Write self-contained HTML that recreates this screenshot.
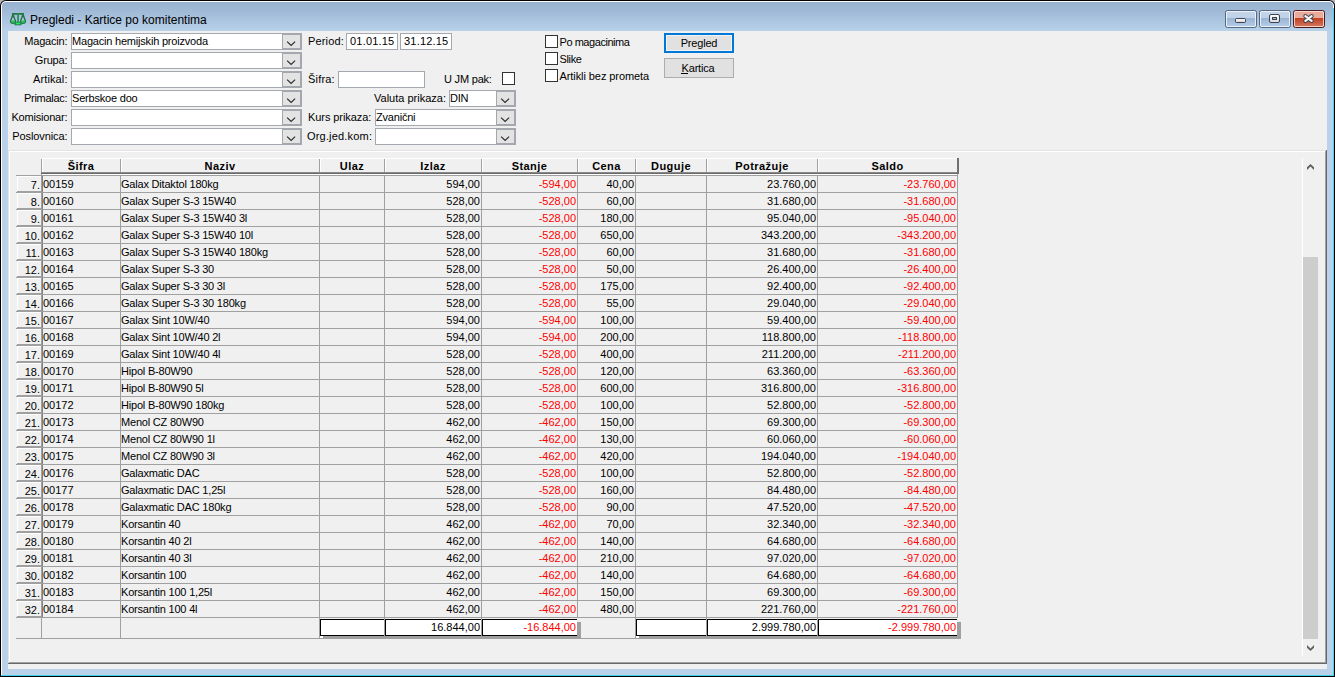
<!DOCTYPE html><html><head><meta charset="utf-8"><title>Pregledi - Kartice po komitentima</title><style>

*{box-sizing:border-box;margin:0;padding:0}
html,body{width:1335px;height:677px;overflow:hidden;background:#b4b4b4}
body{position:relative;font-family:"Liberation Sans",sans-serif;font-size:11px;color:#000}
.ab{position:absolute}
.t{position:absolute;white-space:pre;line-height:17px;height:17px;letter-spacing:-0.2px;margin-top:1px}
.n{position:absolute;white-space:pre;line-height:17px;height:17px;text-align:right;margin-top:1px}
.r{color:#f00}
.hl{position:absolute;height:1px;background:#a0a0a0}
.vl{position:absolute;width:1px;background:#a0a0a0}
.combo{position:absolute;height:17px;border:1px solid #a4a8af;background:#fff}
.combo .btn{position:absolute;right:-1px;top:-1px;width:20px;height:17px;background:#a4a7ad}
.combo .btn i{position:absolute;left:1px;top:2px;width:17px;height:13px;background:#e3e3e3}
.combo .btn svg{position:absolute;left:0;top:0}
.combo .v{position:absolute;left:0px;top:0;line-height:15px;white-space:pre;letter-spacing:-0.2px}
.edit{position:absolute;height:17px;border:1px solid #a4a8af;background:#fff}
.lbl{position:absolute;white-space:pre;line-height:17px;height:17px;text-align:right;letter-spacing:-0.3px}
.chk{position:absolute;width:13px;height:13px;border:1px solid #333;background:#fff}
.hd{position:absolute;top:160px;height:13px;line-height:13px;text-align:center;font-weight:bold;white-space:pre;letter-spacing:0.45px}

</style></head><body>
<div class="ab" style="left:0;top:0;width:1335px;height:677px;border-radius:6px 6px 0 0;background:#000"></div>
<div class="ab" style="left:1px;top:1px;width:1333px;height:675px;border-radius:5px 5px 0 0;background:#fff"></div>
<div class="ab" style="left:2px;top:2px;width:1331px;height:674px;border-radius:4px 4px 0 0;background:linear-gradient(#98b1cf 0px,#a3bcd9 12px,#b9d2ea 29px,#bad1ea 100%)"></div>
<div class="ab" style="left:1333px;top:8px;width:1px;height:669px;background:#3fd3f0"></div>
<div class="ab" style="left:1px;top:675px;width:1333px;height:1px;background:#3fd3f0"></div>
<div class="ab" style="left:0;top:676px;width:1335px;height:1px;background:#000"></div>
<svg class="ab" style="left:8px;top:10px" width="20" height="17" viewBox="0 0 20 17">
<path d="M5 4.5 L2.6 11 Q2.6 13.3 5 13.3 Q7.4 13.3 7.4 11 Z" fill="#b4c8dc" stroke="#1f7544" stroke-width="1.4" stroke-linejoin="round"/>
<path d="M15 4.5 L12.6 11 Q12.6 13.3 15 13.3 Q17.4 13.3 17.4 11 Z" fill="#b4c8dc" stroke="#1f7544" stroke-width="1.4" stroke-linejoin="round"/>
<path d="M3 10.5 Q3 13 5 13 Q7 13 7 10.5 Z" fill="#22c05a"/>
<path d="M13 10.5 Q13 13 15 13 Q17 13 17 10.5 Z" fill="#22c05a"/>
<rect x="4" y="3" width="12" height="1.8" fill="#1f7a45"/>
<rect x="9.2" y="3" width="1.7" height="10" fill="#2a8a55"/>
<path d="M6.8 14.8 Q6.8 11.8 10 11.8 Q13.2 11.8 13.2 14.8 Z" fill="#20e862" stroke="#1a7040" stroke-width="0.9"/>
</svg>
<div class="ab" style="left:30px;top:12px;font-size:12px;line-height:17px;white-space:pre">Pregledi - Kartice po komitentima</div>
<div class="ab" style="left:1225px;top:10px;width:32px;height:18px;border:1px solid #57677f;border-radius:2.5px;background:linear-gradient(#c5d6ea 0px,#bfd1e8 7px,#99b3d2 7px,#a6bfdc 11px,#b5cde8 16px);box-shadow:inset 0 0 0 1px rgba(240,248,255,0.85)"></div>
<div class="ab" style="left:1259px;top:10px;width:32px;height:18px;border:1px solid #57677f;border-radius:2.5px;background:linear-gradient(#c5d6ea 0px,#bfd1e8 7px,#99b3d2 7px,#a6bfdc 11px,#b5cde8 16px);box-shadow:inset 0 0 0 1px rgba(240,248,255,0.85)"></div>
<div class="ab" style="left:1293px;top:10px;width:32px;height:18px;border:1px solid #4b1a20;border-radius:2.5px;background:linear-gradient(#eaa796 0px,#e9ad9e 7px,#c2401f 7px,#c9563a 11px,#d47c66 16px);box-shadow:inset 0 0 0 1px rgba(255,230,220,0.8)"></div>
<div class="ab" style="left:1235px;top:18px;width:11px;height:5px;border:1px solid #3b4453;border-radius:1.5px;background:linear-gradient(#fafafa,#d8d8d8)"></div>
<div class="ab" style="left:1269px;top:14px;width:11px;height:9px;border:1px solid #3b4453;border-radius:2px;background:linear-gradient(#fafafa,#dcdcdc)"></div>
<div class="ab" style="left:1272px;top:17px;width:5px;height:3px;border:1px solid #3b4453;background:#9fb6d2"></div>
<svg class="ab" style="left:1302px;top:13px" width="13" height="11" viewBox="0 0 13 11">
<path d="M3.4 3.1 L9.6 7.9 M9.6 3.1 L3.4 7.9" stroke="#3b4453" stroke-width="4.2" stroke-linecap="round"/>
<path d="M3.4 3.1 L9.6 7.9 M9.6 3.1 L3.4 7.9" stroke="#f4f4f4" stroke-width="2.3" stroke-linecap="round"/>
</svg>
<div class="ab" style="left:8px;top:31px;width:1319px;height:638px;background:#f0f0f0"></div>
<div class="lbl" style="left:0px;top:33px;width:67.30px;letter-spacing:-0.2px">Magacin:</div>
<div class="combo" style="left:71px;top:33px;width:231px"><span class="v">Magacin hemijskih proizvoda</span><div class="btn"><i></i><svg width="20" height="17"><polyline points="5.1,8.6 9.1,12.4 13.1,8.6" fill="none" stroke="#2b2b2b" stroke-width="1.2"/></svg></div></div>
<div class="lbl" style="left:0px;top:52px;width:67.30px;letter-spacing:-0.2px">Grupa:</div>
<div class="combo" style="left:71px;top:52px;width:231px"><span class="v"></span><div class="btn"><i></i><svg width="20" height="17"><polyline points="5.1,8.6 9.1,12.4 13.1,8.6" fill="none" stroke="#2b2b2b" stroke-width="1.2"/></svg></div></div>
<div class="lbl" style="left:0px;top:71px;width:67.63px;letter-spacing:0.13px">Artikal:</div>
<div class="combo" style="left:71px;top:71px;width:231px"><span class="v"></span><div class="btn"><i></i><svg width="20" height="17"><polyline points="5.1,8.6 9.1,12.4 13.1,8.6" fill="none" stroke="#2b2b2b" stroke-width="1.2"/></svg></div></div>
<div class="lbl" style="left:0px;top:90px;width:67.20px;letter-spacing:-0.3px">Primalac:</div>
<div class="combo" style="left:71px;top:90px;width:231px"><span class="v">Serbskoe doo</span><div class="btn"><i></i><svg width="20" height="17"><polyline points="5.1,8.6 9.1,12.4 13.1,8.6" fill="none" stroke="#2b2b2b" stroke-width="1.2"/></svg></div></div>
<div class="lbl" style="left:0px;top:109px;width:67.30px;letter-spacing:-0.2px">Komisionar:</div>
<div class="combo" style="left:71px;top:109px;width:231px"><span class="v"></span><div class="btn"><i></i><svg width="20" height="17"><polyline points="5.1,8.6 9.1,12.4 13.1,8.6" fill="none" stroke="#2b2b2b" stroke-width="1.2"/></svg></div></div>
<div class="lbl" style="left:0px;top:128px;width:67.40px;letter-spacing:-0.1px">Poslovnica:</div>
<div class="combo" style="left:71px;top:128px;width:231px"><span class="v"></span><div class="btn"><i></i><svg width="20" height="17"><polyline points="5.1,8.6 9.1,12.4 13.1,8.6" fill="none" stroke="#2b2b2b" stroke-width="1.2"/></svg></div></div>
<div class="ab" style="left:308px;top:33px;line-height:17px;white-space:pre;letter-spacing:0.15px">Period:</div>
<div class="edit" style="left:346px;top:33px;width:52px"><span class="ab" style="left:3px;top:0;line-height:15px;letter-spacing:0.2px">01.01.15</span></div>
<div class="edit" style="left:400px;top:33px;width:52px"><span class="ab" style="left:3px;top:0;line-height:15px;letter-spacing:0.2px">31.12.15</span></div>
<div class="ab" style="left:308px;top:71px;line-height:17px;white-space:pre;letter-spacing:0.2px">Šifra:</div>
<div class="edit" style="left:338px;top:71px;width:87px"></div>
<div class="ab" style="left:444px;top:71px;line-height:17px;white-space:pre;letter-spacing:-0.2px">U JM pak:</div>
<div class="chk" style="left:502px;top:72px"></div>
<div class="ab" style="left:374px;top:90px;line-height:17px;white-space:pre;letter-spacing:0px">Valuta prikaza:</div>
<div class="combo" style="left:449px;top:90px;width:67px"><span class="v">DIN</span><div class="btn"><i></i><svg width="20" height="17"><polyline points="5.1,8.6 9.1,12.4 13.1,8.6" fill="none" stroke="#2b2b2b" stroke-width="1.2"/></svg></div></div>
<div class="ab" style="left:308px;top:109px;line-height:17px;white-space:pre;letter-spacing:-0.08px">Kurs prikaza:</div>
<div class="combo" style="left:375px;top:109px;width:141px"><span class="v">Zvanični</span><div class="btn"><i></i><svg width="20" height="17"><polyline points="5.1,8.6 9.1,12.4 13.1,8.6" fill="none" stroke="#2b2b2b" stroke-width="1.2"/></svg></div></div>
<div class="ab" style="left:307px;top:128px;line-height:17px;white-space:pre;letter-spacing:0.18px">Org.jed.kom:</div>
<div class="combo" style="left:375px;top:128px;width:141px"><span class="v"></span><div class="btn"><i></i><svg width="20" height="17"><polyline points="5.1,8.6 9.1,12.4 13.1,8.6" fill="none" stroke="#2b2b2b" stroke-width="1.2"/></svg></div></div>
<div class="chk" style="left:545px;top:35px"></div>
<div class="t" style="left:559.5px;top:33px;letter-spacing:-0.45px">Po magacinima</div>
<div class="chk" style="left:545px;top:52px"></div>
<div class="t" style="left:559.5px;top:50px;letter-spacing:-0.35px">Slike</div>
<div class="chk" style="left:545px;top:69px"></div>
<div class="t" style="left:559.5px;top:67px;letter-spacing:-0.08px">Artikli bez prometa</div>
<div class="ab" style="left:664px;top:33px;width:70px;height:20px;border:2px solid #0078d7;background:#e1e1e1;box-shadow:inset 0 0 0 1px #f3f3f3"></div>
<div class="t" style="left:664px;top:34px;width:70px;text-align:center">Pregled</div>
<div class="ab" style="left:664px;top:58px;width:70px;height:20px;border:1px solid #adadad;background:#e1e1e1"></div>
<div class="t" style="left:663px;top:59px;width:70px;text-align:center">Kartica</div>
<div class="ab" style="left:681px;top:73px;width:7px;height:1px;background:#000"></div>
<div class="ab" style="left:8px;top:150px;width:1319px;height:1px;background:#e3e3e3"></div>
<div class="ab" style="left:8px;top:150px;width:1px;height:514px;background:#e3e3e3"></div>
<div class="ab" style="left:9px;top:151px;width:1317px;height:1px;background:#fff"></div>
<div class="ab" style="left:9px;top:151px;width:1px;height:512px;background:#fff"></div>
<div class="ab" style="left:1325px;top:151px;width:1px;height:512px;background:#a0a0a0"></div>
<div class="ab" style="left:9px;top:662px;width:1317px;height:1px;background:#a0a0a0"></div>
<div class="ab" style="left:1326px;top:150px;width:1px;height:514px;background:#696969"></div>
<div class="ab" style="left:8px;top:663px;width:1319px;height:1px;background:#696969"></div>
<div class="ab" style="left:42px;top:158px;width:915px;height:1px;background:#fff"></div>
<div class="ab" style="left:42px;top:159px;width:1px;height:13px;background:#fff"></div>
<div class="hd" style="left:42px;width:78px">Šifra</div>
<div class="ab" style="left:121px;top:159px;width:1px;height:13px;background:#fff"></div>
<div class="hd" style="left:121px;width:198px">Naziv</div>
<div class="ab" style="left:320px;top:159px;width:1px;height:13px;background:#fff"></div>
<div class="hd" style="left:320px;width:64px">Ulaz</div>
<div class="ab" style="left:385px;top:159px;width:1px;height:13px;background:#fff"></div>
<div class="hd" style="left:385px;width:96px">Izlaz</div>
<div class="ab" style="left:482px;top:159px;width:1px;height:13px;background:#fff"></div>
<div class="hd" style="left:482px;width:95px">Stanje</div>
<div class="ab" style="left:578px;top:159px;width:1px;height:13px;background:#fff"></div>
<div class="hd" style="left:578px;width:57px">Cena</div>
<div class="ab" style="left:636px;top:159px;width:1px;height:13px;background:#fff"></div>
<div class="hd" style="left:636px;width:70px">Duguje</div>
<div class="ab" style="left:707px;top:159px;width:1px;height:13px;background:#fff"></div>
<div class="hd" style="left:707px;width:110px">Potražuje</div>
<div class="ab" style="left:818px;top:159px;width:1px;height:13px;background:#fff"></div>
<div class="hd" style="left:818px;width:139px">Saldo</div>
<div class="vl" style="left:41px;top:159px;height:458px"></div>
<div class="vl" style="left:120px;top:159px;height:458px"></div>
<div class="vl" style="left:319px;top:159px;height:458px"></div>
<div class="vl" style="left:384px;top:159px;height:458px"></div>
<div class="vl" style="left:481px;top:159px;height:458px"></div>
<div class="vl" style="left:577px;top:159px;height:458px"></div>
<div class="vl" style="left:635px;top:159px;height:458px"></div>
<div class="vl" style="left:706px;top:159px;height:458px"></div>
<div class="vl" style="left:817px;top:159px;height:458px"></div>
<div class="vl" style="left:957px;top:159px;height:458px"></div>
<div class="ab" style="left:41px;top:172px;width:917px;height:1px;background:#8a8a8a"></div>
<div class="ab" style="left:41px;top:173px;width:917px;height:1px;background:#696969"></div>
<div class="ab" style="left:42px;top:174px;width:915px;height:1px;background:#fff"></div>
<div class="ab" style="left:957px;top:158px;width:2px;height:16px;background:#707070"></div>
<div class="ab" style="left:42px;top:175px;width:1px;height:442px;background:#808080"></div>
<div class="hl" style="left:16px;top:175px;width:942px"></div>
<div class="ab" style="left:17px;top:176px;width:24px;height:1px;background:#fff"></div>
<div class="ab" style="left:17px;top:176px;width:1px;height:15px;background:#fff"></div>
<div class="ab" style="left:17px;top:191px;width:24px;height:1px;background:#a0a0a0"></div>
<div class="n" style="left:16px;top:176px;width:24px">7.</div>
<div class="t" style="left:43px;top:175px;letter-spacing:0">00159</div>
<div class="t" style="left:121px;top:175px">Galax Ditaktol 180kg</div>
<div class="n" style="left:381px;top:175px;width:100px;padding-right:1px">594,00</div>
<div class="n r" style="left:477px;top:175px;width:100px;padding-right:1px">-594,00</div>
<div class="n" style="left:535px;top:175px;width:100px;padding-right:1px">40,00</div>
<div class="n" style="left:717px;top:175px;width:100px;padding-right:1px">23.760,00</div>
<div class="n r" style="left:857px;top:175px;width:100px;padding-right:1px">-23.760,00</div>
<div class="hl" style="left:16px;top:192px;width:942px"></div>
<div class="ab" style="left:17px;top:193px;width:24px;height:1px;background:#fff"></div>
<div class="ab" style="left:17px;top:193px;width:1px;height:15px;background:#fff"></div>
<div class="ab" style="left:17px;top:208px;width:24px;height:1px;background:#a0a0a0"></div>
<div class="n" style="left:16px;top:193px;width:24px">8.</div>
<div class="t" style="left:43px;top:192px;letter-spacing:0">00160</div>
<div class="t" style="left:121px;top:192px">Galax Super S-3 15W40</div>
<div class="n" style="left:381px;top:192px;width:100px;padding-right:1px">528,00</div>
<div class="n r" style="left:477px;top:192px;width:100px;padding-right:1px">-528,00</div>
<div class="n" style="left:535px;top:192px;width:100px;padding-right:1px">60,00</div>
<div class="n" style="left:717px;top:192px;width:100px;padding-right:1px">31.680,00</div>
<div class="n r" style="left:857px;top:192px;width:100px;padding-right:1px">-31.680,00</div>
<div class="hl" style="left:16px;top:209px;width:942px"></div>
<div class="ab" style="left:17px;top:210px;width:24px;height:1px;background:#fff"></div>
<div class="ab" style="left:17px;top:210px;width:1px;height:15px;background:#fff"></div>
<div class="ab" style="left:17px;top:225px;width:24px;height:1px;background:#a0a0a0"></div>
<div class="n" style="left:16px;top:210px;width:24px">9.</div>
<div class="t" style="left:43px;top:209px;letter-spacing:0">00161</div>
<div class="t" style="left:121px;top:209px">Galax Super S-3 15W40 3l</div>
<div class="n" style="left:381px;top:209px;width:100px;padding-right:1px">528,00</div>
<div class="n r" style="left:477px;top:209px;width:100px;padding-right:1px">-528,00</div>
<div class="n" style="left:535px;top:209px;width:100px;padding-right:1px">180,00</div>
<div class="n" style="left:717px;top:209px;width:100px;padding-right:1px">95.040,00</div>
<div class="n r" style="left:857px;top:209px;width:100px;padding-right:1px">-95.040,00</div>
<div class="hl" style="left:16px;top:226px;width:942px"></div>
<div class="ab" style="left:17px;top:227px;width:24px;height:1px;background:#fff"></div>
<div class="ab" style="left:17px;top:227px;width:1px;height:15px;background:#fff"></div>
<div class="ab" style="left:17px;top:242px;width:24px;height:1px;background:#a0a0a0"></div>
<div class="n" style="left:16px;top:227px;width:24px">10.</div>
<div class="t" style="left:43px;top:226px;letter-spacing:0">00162</div>
<div class="t" style="left:121px;top:226px">Galax Super S-3 15W40 10l</div>
<div class="n" style="left:381px;top:226px;width:100px;padding-right:1px">528,00</div>
<div class="n r" style="left:477px;top:226px;width:100px;padding-right:1px">-528,00</div>
<div class="n" style="left:535px;top:226px;width:100px;padding-right:1px">650,00</div>
<div class="n" style="left:717px;top:226px;width:100px;padding-right:1px">343.200,00</div>
<div class="n r" style="left:857px;top:226px;width:100px;padding-right:1px">-343.200,00</div>
<div class="hl" style="left:16px;top:243px;width:942px"></div>
<div class="ab" style="left:17px;top:244px;width:24px;height:1px;background:#fff"></div>
<div class="ab" style="left:17px;top:244px;width:1px;height:15px;background:#fff"></div>
<div class="ab" style="left:17px;top:259px;width:24px;height:1px;background:#a0a0a0"></div>
<div class="n" style="left:16px;top:244px;width:24px">11.</div>
<div class="t" style="left:43px;top:243px;letter-spacing:0">00163</div>
<div class="t" style="left:121px;top:243px">Galax Super S-3 15W40 180kg</div>
<div class="n" style="left:381px;top:243px;width:100px;padding-right:1px">528,00</div>
<div class="n r" style="left:477px;top:243px;width:100px;padding-right:1px">-528,00</div>
<div class="n" style="left:535px;top:243px;width:100px;padding-right:1px">60,00</div>
<div class="n" style="left:717px;top:243px;width:100px;padding-right:1px">31.680,00</div>
<div class="n r" style="left:857px;top:243px;width:100px;padding-right:1px">-31.680,00</div>
<div class="hl" style="left:16px;top:260px;width:942px"></div>
<div class="ab" style="left:17px;top:261px;width:24px;height:1px;background:#fff"></div>
<div class="ab" style="left:17px;top:261px;width:1px;height:15px;background:#fff"></div>
<div class="ab" style="left:17px;top:276px;width:24px;height:1px;background:#a0a0a0"></div>
<div class="n" style="left:16px;top:261px;width:24px">12.</div>
<div class="t" style="left:43px;top:260px;letter-spacing:0">00164</div>
<div class="t" style="left:121px;top:260px">Galax Super S-3 30</div>
<div class="n" style="left:381px;top:260px;width:100px;padding-right:1px">528,00</div>
<div class="n r" style="left:477px;top:260px;width:100px;padding-right:1px">-528,00</div>
<div class="n" style="left:535px;top:260px;width:100px;padding-right:1px">50,00</div>
<div class="n" style="left:717px;top:260px;width:100px;padding-right:1px">26.400,00</div>
<div class="n r" style="left:857px;top:260px;width:100px;padding-right:1px">-26.400,00</div>
<div class="hl" style="left:16px;top:277px;width:942px"></div>
<div class="ab" style="left:17px;top:278px;width:24px;height:1px;background:#fff"></div>
<div class="ab" style="left:17px;top:278px;width:1px;height:15px;background:#fff"></div>
<div class="ab" style="left:17px;top:293px;width:24px;height:1px;background:#a0a0a0"></div>
<div class="n" style="left:16px;top:278px;width:24px">13.</div>
<div class="t" style="left:43px;top:277px;letter-spacing:0">00165</div>
<div class="t" style="left:121px;top:277px">Galax Super S-3 30 3l</div>
<div class="n" style="left:381px;top:277px;width:100px;padding-right:1px">528,00</div>
<div class="n r" style="left:477px;top:277px;width:100px;padding-right:1px">-528,00</div>
<div class="n" style="left:535px;top:277px;width:100px;padding-right:1px">175,00</div>
<div class="n" style="left:717px;top:277px;width:100px;padding-right:1px">92.400,00</div>
<div class="n r" style="left:857px;top:277px;width:100px;padding-right:1px">-92.400,00</div>
<div class="hl" style="left:16px;top:294px;width:942px"></div>
<div class="ab" style="left:17px;top:295px;width:24px;height:1px;background:#fff"></div>
<div class="ab" style="left:17px;top:295px;width:1px;height:15px;background:#fff"></div>
<div class="ab" style="left:17px;top:310px;width:24px;height:1px;background:#a0a0a0"></div>
<div class="n" style="left:16px;top:295px;width:24px">14.</div>
<div class="t" style="left:43px;top:294px;letter-spacing:0">00166</div>
<div class="t" style="left:121px;top:294px">Galax Super S-3 30 180kg</div>
<div class="n" style="left:381px;top:294px;width:100px;padding-right:1px">528,00</div>
<div class="n r" style="left:477px;top:294px;width:100px;padding-right:1px">-528,00</div>
<div class="n" style="left:535px;top:294px;width:100px;padding-right:1px">55,00</div>
<div class="n" style="left:717px;top:294px;width:100px;padding-right:1px">29.040,00</div>
<div class="n r" style="left:857px;top:294px;width:100px;padding-right:1px">-29.040,00</div>
<div class="hl" style="left:16px;top:311px;width:942px"></div>
<div class="ab" style="left:17px;top:312px;width:24px;height:1px;background:#fff"></div>
<div class="ab" style="left:17px;top:312px;width:1px;height:15px;background:#fff"></div>
<div class="ab" style="left:17px;top:327px;width:24px;height:1px;background:#a0a0a0"></div>
<div class="n" style="left:16px;top:312px;width:24px">15.</div>
<div class="t" style="left:43px;top:311px;letter-spacing:0">00167</div>
<div class="t" style="left:121px;top:311px">Galax Sint 10W/40</div>
<div class="n" style="left:381px;top:311px;width:100px;padding-right:1px">594,00</div>
<div class="n r" style="left:477px;top:311px;width:100px;padding-right:1px">-594,00</div>
<div class="n" style="left:535px;top:311px;width:100px;padding-right:1px">100,00</div>
<div class="n" style="left:717px;top:311px;width:100px;padding-right:1px">59.400,00</div>
<div class="n r" style="left:857px;top:311px;width:100px;padding-right:1px">-59.400,00</div>
<div class="hl" style="left:16px;top:328px;width:942px"></div>
<div class="ab" style="left:17px;top:329px;width:24px;height:1px;background:#fff"></div>
<div class="ab" style="left:17px;top:329px;width:1px;height:15px;background:#fff"></div>
<div class="ab" style="left:17px;top:344px;width:24px;height:1px;background:#a0a0a0"></div>
<div class="n" style="left:16px;top:329px;width:24px">16.</div>
<div class="t" style="left:43px;top:328px;letter-spacing:0">00168</div>
<div class="t" style="left:121px;top:328px">Galax Sint 10W/40 2l</div>
<div class="n" style="left:381px;top:328px;width:100px;padding-right:1px">594,00</div>
<div class="n r" style="left:477px;top:328px;width:100px;padding-right:1px">-594,00</div>
<div class="n" style="left:535px;top:328px;width:100px;padding-right:1px">200,00</div>
<div class="n" style="left:717px;top:328px;width:100px;padding-right:1px">118.800,00</div>
<div class="n r" style="left:857px;top:328px;width:100px;padding-right:1px">-118.800,00</div>
<div class="hl" style="left:16px;top:345px;width:942px"></div>
<div class="ab" style="left:17px;top:346px;width:24px;height:1px;background:#fff"></div>
<div class="ab" style="left:17px;top:346px;width:1px;height:15px;background:#fff"></div>
<div class="ab" style="left:17px;top:361px;width:24px;height:1px;background:#a0a0a0"></div>
<div class="n" style="left:16px;top:346px;width:24px">17.</div>
<div class="t" style="left:43px;top:345px;letter-spacing:0">00169</div>
<div class="t" style="left:121px;top:345px">Galax Sint 10W/40 4l</div>
<div class="n" style="left:381px;top:345px;width:100px;padding-right:1px">528,00</div>
<div class="n r" style="left:477px;top:345px;width:100px;padding-right:1px">-528,00</div>
<div class="n" style="left:535px;top:345px;width:100px;padding-right:1px">400,00</div>
<div class="n" style="left:717px;top:345px;width:100px;padding-right:1px">211.200,00</div>
<div class="n r" style="left:857px;top:345px;width:100px;padding-right:1px">-211.200,00</div>
<div class="hl" style="left:16px;top:362px;width:942px"></div>
<div class="ab" style="left:17px;top:363px;width:24px;height:1px;background:#fff"></div>
<div class="ab" style="left:17px;top:363px;width:1px;height:15px;background:#fff"></div>
<div class="ab" style="left:17px;top:378px;width:24px;height:1px;background:#a0a0a0"></div>
<div class="n" style="left:16px;top:363px;width:24px">18.</div>
<div class="t" style="left:43px;top:362px;letter-spacing:0">00170</div>
<div class="t" style="left:121px;top:362px">Hipol B-80W90</div>
<div class="n" style="left:381px;top:362px;width:100px;padding-right:1px">528,00</div>
<div class="n r" style="left:477px;top:362px;width:100px;padding-right:1px">-528,00</div>
<div class="n" style="left:535px;top:362px;width:100px;padding-right:1px">120,00</div>
<div class="n" style="left:717px;top:362px;width:100px;padding-right:1px">63.360,00</div>
<div class="n r" style="left:857px;top:362px;width:100px;padding-right:1px">-63.360,00</div>
<div class="hl" style="left:16px;top:379px;width:942px"></div>
<div class="ab" style="left:17px;top:380px;width:24px;height:1px;background:#fff"></div>
<div class="ab" style="left:17px;top:380px;width:1px;height:15px;background:#fff"></div>
<div class="ab" style="left:17px;top:395px;width:24px;height:1px;background:#a0a0a0"></div>
<div class="n" style="left:16px;top:380px;width:24px">19.</div>
<div class="t" style="left:43px;top:379px;letter-spacing:0">00171</div>
<div class="t" style="left:121px;top:379px">Hipol B-80W90 5l</div>
<div class="n" style="left:381px;top:379px;width:100px;padding-right:1px">528,00</div>
<div class="n r" style="left:477px;top:379px;width:100px;padding-right:1px">-528,00</div>
<div class="n" style="left:535px;top:379px;width:100px;padding-right:1px">600,00</div>
<div class="n" style="left:717px;top:379px;width:100px;padding-right:1px">316.800,00</div>
<div class="n r" style="left:857px;top:379px;width:100px;padding-right:1px">-316.800,00</div>
<div class="hl" style="left:16px;top:396px;width:942px"></div>
<div class="ab" style="left:17px;top:397px;width:24px;height:1px;background:#fff"></div>
<div class="ab" style="left:17px;top:397px;width:1px;height:15px;background:#fff"></div>
<div class="ab" style="left:17px;top:412px;width:24px;height:1px;background:#a0a0a0"></div>
<div class="n" style="left:16px;top:397px;width:24px">20.</div>
<div class="t" style="left:43px;top:396px;letter-spacing:0">00172</div>
<div class="t" style="left:121px;top:396px">Hipol B-80W90 180kg</div>
<div class="n" style="left:381px;top:396px;width:100px;padding-right:1px">528,00</div>
<div class="n r" style="left:477px;top:396px;width:100px;padding-right:1px">-528,00</div>
<div class="n" style="left:535px;top:396px;width:100px;padding-right:1px">100,00</div>
<div class="n" style="left:717px;top:396px;width:100px;padding-right:1px">52.800,00</div>
<div class="n r" style="left:857px;top:396px;width:100px;padding-right:1px">-52.800,00</div>
<div class="hl" style="left:16px;top:413px;width:942px"></div>
<div class="ab" style="left:17px;top:414px;width:24px;height:1px;background:#fff"></div>
<div class="ab" style="left:17px;top:414px;width:1px;height:15px;background:#fff"></div>
<div class="ab" style="left:17px;top:429px;width:24px;height:1px;background:#a0a0a0"></div>
<div class="n" style="left:16px;top:414px;width:24px">21.</div>
<div class="t" style="left:43px;top:413px;letter-spacing:0">00173</div>
<div class="t" style="left:121px;top:413px">Menol CZ 80W90</div>
<div class="n" style="left:381px;top:413px;width:100px;padding-right:1px">462,00</div>
<div class="n r" style="left:477px;top:413px;width:100px;padding-right:1px">-462,00</div>
<div class="n" style="left:535px;top:413px;width:100px;padding-right:1px">150,00</div>
<div class="n" style="left:717px;top:413px;width:100px;padding-right:1px">69.300,00</div>
<div class="n r" style="left:857px;top:413px;width:100px;padding-right:1px">-69.300,00</div>
<div class="hl" style="left:16px;top:430px;width:942px"></div>
<div class="ab" style="left:17px;top:431px;width:24px;height:1px;background:#fff"></div>
<div class="ab" style="left:17px;top:431px;width:1px;height:15px;background:#fff"></div>
<div class="ab" style="left:17px;top:446px;width:24px;height:1px;background:#a0a0a0"></div>
<div class="n" style="left:16px;top:431px;width:24px">22.</div>
<div class="t" style="left:43px;top:430px;letter-spacing:0">00174</div>
<div class="t" style="left:121px;top:430px">Menol CZ 80W90 1l</div>
<div class="n" style="left:381px;top:430px;width:100px;padding-right:1px">462,00</div>
<div class="n r" style="left:477px;top:430px;width:100px;padding-right:1px">-462,00</div>
<div class="n" style="left:535px;top:430px;width:100px;padding-right:1px">130,00</div>
<div class="n" style="left:717px;top:430px;width:100px;padding-right:1px">60.060,00</div>
<div class="n r" style="left:857px;top:430px;width:100px;padding-right:1px">-60.060,00</div>
<div class="hl" style="left:16px;top:447px;width:942px"></div>
<div class="ab" style="left:17px;top:448px;width:24px;height:1px;background:#fff"></div>
<div class="ab" style="left:17px;top:448px;width:1px;height:15px;background:#fff"></div>
<div class="ab" style="left:17px;top:463px;width:24px;height:1px;background:#a0a0a0"></div>
<div class="n" style="left:16px;top:448px;width:24px">23.</div>
<div class="t" style="left:43px;top:447px;letter-spacing:0">00175</div>
<div class="t" style="left:121px;top:447px">Menol CZ 80W90 3l</div>
<div class="n" style="left:381px;top:447px;width:100px;padding-right:1px">462,00</div>
<div class="n r" style="left:477px;top:447px;width:100px;padding-right:1px">-462,00</div>
<div class="n" style="left:535px;top:447px;width:100px;padding-right:1px">420,00</div>
<div class="n" style="left:717px;top:447px;width:100px;padding-right:1px">194.040,00</div>
<div class="n r" style="left:857px;top:447px;width:100px;padding-right:1px">-194.040,00</div>
<div class="hl" style="left:16px;top:464px;width:942px"></div>
<div class="ab" style="left:17px;top:465px;width:24px;height:1px;background:#fff"></div>
<div class="ab" style="left:17px;top:465px;width:1px;height:15px;background:#fff"></div>
<div class="ab" style="left:17px;top:480px;width:24px;height:1px;background:#a0a0a0"></div>
<div class="n" style="left:16px;top:465px;width:24px">24.</div>
<div class="t" style="left:43px;top:464px;letter-spacing:0">00176</div>
<div class="t" style="left:121px;top:464px">Galaxmatic DAC</div>
<div class="n" style="left:381px;top:464px;width:100px;padding-right:1px">528,00</div>
<div class="n r" style="left:477px;top:464px;width:100px;padding-right:1px">-528,00</div>
<div class="n" style="left:535px;top:464px;width:100px;padding-right:1px">100,00</div>
<div class="n" style="left:717px;top:464px;width:100px;padding-right:1px">52.800,00</div>
<div class="n r" style="left:857px;top:464px;width:100px;padding-right:1px">-52.800,00</div>
<div class="hl" style="left:16px;top:481px;width:942px"></div>
<div class="ab" style="left:17px;top:482px;width:24px;height:1px;background:#fff"></div>
<div class="ab" style="left:17px;top:482px;width:1px;height:15px;background:#fff"></div>
<div class="ab" style="left:17px;top:497px;width:24px;height:1px;background:#a0a0a0"></div>
<div class="n" style="left:16px;top:482px;width:24px">25.</div>
<div class="t" style="left:43px;top:481px;letter-spacing:0">00177</div>
<div class="t" style="left:121px;top:481px">Galaxmatic DAC 1,25l</div>
<div class="n" style="left:381px;top:481px;width:100px;padding-right:1px">528,00</div>
<div class="n r" style="left:477px;top:481px;width:100px;padding-right:1px">-528,00</div>
<div class="n" style="left:535px;top:481px;width:100px;padding-right:1px">160,00</div>
<div class="n" style="left:717px;top:481px;width:100px;padding-right:1px">84.480,00</div>
<div class="n r" style="left:857px;top:481px;width:100px;padding-right:1px">-84.480,00</div>
<div class="hl" style="left:16px;top:498px;width:942px"></div>
<div class="ab" style="left:17px;top:499px;width:24px;height:1px;background:#fff"></div>
<div class="ab" style="left:17px;top:499px;width:1px;height:15px;background:#fff"></div>
<div class="ab" style="left:17px;top:514px;width:24px;height:1px;background:#a0a0a0"></div>
<div class="n" style="left:16px;top:499px;width:24px">26.</div>
<div class="t" style="left:43px;top:498px;letter-spacing:0">00178</div>
<div class="t" style="left:121px;top:498px">Galaxmatic DAC 180kg</div>
<div class="n" style="left:381px;top:498px;width:100px;padding-right:1px">528,00</div>
<div class="n r" style="left:477px;top:498px;width:100px;padding-right:1px">-528,00</div>
<div class="n" style="left:535px;top:498px;width:100px;padding-right:1px">90,00</div>
<div class="n" style="left:717px;top:498px;width:100px;padding-right:1px">47.520,00</div>
<div class="n r" style="left:857px;top:498px;width:100px;padding-right:1px">-47.520,00</div>
<div class="hl" style="left:16px;top:515px;width:942px"></div>
<div class="ab" style="left:17px;top:516px;width:24px;height:1px;background:#fff"></div>
<div class="ab" style="left:17px;top:516px;width:1px;height:15px;background:#fff"></div>
<div class="ab" style="left:17px;top:531px;width:24px;height:1px;background:#a0a0a0"></div>
<div class="n" style="left:16px;top:516px;width:24px">27.</div>
<div class="t" style="left:43px;top:515px;letter-spacing:0">00179</div>
<div class="t" style="left:121px;top:515px">Korsantin 40</div>
<div class="n" style="left:381px;top:515px;width:100px;padding-right:1px">462,00</div>
<div class="n r" style="left:477px;top:515px;width:100px;padding-right:1px">-462,00</div>
<div class="n" style="left:535px;top:515px;width:100px;padding-right:1px">70,00</div>
<div class="n" style="left:717px;top:515px;width:100px;padding-right:1px">32.340,00</div>
<div class="n r" style="left:857px;top:515px;width:100px;padding-right:1px">-32.340,00</div>
<div class="hl" style="left:16px;top:532px;width:942px"></div>
<div class="ab" style="left:17px;top:533px;width:24px;height:1px;background:#fff"></div>
<div class="ab" style="left:17px;top:533px;width:1px;height:15px;background:#fff"></div>
<div class="ab" style="left:17px;top:548px;width:24px;height:1px;background:#a0a0a0"></div>
<div class="n" style="left:16px;top:533px;width:24px">28.</div>
<div class="t" style="left:43px;top:532px;letter-spacing:0">00180</div>
<div class="t" style="left:121px;top:532px">Korsantin 40 2l</div>
<div class="n" style="left:381px;top:532px;width:100px;padding-right:1px">462,00</div>
<div class="n r" style="left:477px;top:532px;width:100px;padding-right:1px">-462,00</div>
<div class="n" style="left:535px;top:532px;width:100px;padding-right:1px">140,00</div>
<div class="n" style="left:717px;top:532px;width:100px;padding-right:1px">64.680,00</div>
<div class="n r" style="left:857px;top:532px;width:100px;padding-right:1px">-64.680,00</div>
<div class="hl" style="left:16px;top:549px;width:942px"></div>
<div class="ab" style="left:17px;top:550px;width:24px;height:1px;background:#fff"></div>
<div class="ab" style="left:17px;top:550px;width:1px;height:15px;background:#fff"></div>
<div class="ab" style="left:17px;top:565px;width:24px;height:1px;background:#a0a0a0"></div>
<div class="n" style="left:16px;top:550px;width:24px">29.</div>
<div class="t" style="left:43px;top:549px;letter-spacing:0">00181</div>
<div class="t" style="left:121px;top:549px">Korsantin 40 3l</div>
<div class="n" style="left:381px;top:549px;width:100px;padding-right:1px">462,00</div>
<div class="n r" style="left:477px;top:549px;width:100px;padding-right:1px">-462,00</div>
<div class="n" style="left:535px;top:549px;width:100px;padding-right:1px">210,00</div>
<div class="n" style="left:717px;top:549px;width:100px;padding-right:1px">97.020,00</div>
<div class="n r" style="left:857px;top:549px;width:100px;padding-right:1px">-97.020,00</div>
<div class="hl" style="left:16px;top:566px;width:942px"></div>
<div class="ab" style="left:17px;top:567px;width:24px;height:1px;background:#fff"></div>
<div class="ab" style="left:17px;top:567px;width:1px;height:15px;background:#fff"></div>
<div class="ab" style="left:17px;top:582px;width:24px;height:1px;background:#a0a0a0"></div>
<div class="n" style="left:16px;top:567px;width:24px">30.</div>
<div class="t" style="left:43px;top:566px;letter-spacing:0">00182</div>
<div class="t" style="left:121px;top:566px">Korsantin 100</div>
<div class="n" style="left:381px;top:566px;width:100px;padding-right:1px">462,00</div>
<div class="n r" style="left:477px;top:566px;width:100px;padding-right:1px">-462,00</div>
<div class="n" style="left:535px;top:566px;width:100px;padding-right:1px">140,00</div>
<div class="n" style="left:717px;top:566px;width:100px;padding-right:1px">64.680,00</div>
<div class="n r" style="left:857px;top:566px;width:100px;padding-right:1px">-64.680,00</div>
<div class="hl" style="left:16px;top:583px;width:942px"></div>
<div class="ab" style="left:17px;top:584px;width:24px;height:1px;background:#fff"></div>
<div class="ab" style="left:17px;top:584px;width:1px;height:15px;background:#fff"></div>
<div class="ab" style="left:17px;top:599px;width:24px;height:1px;background:#a0a0a0"></div>
<div class="n" style="left:16px;top:584px;width:24px">31.</div>
<div class="t" style="left:43px;top:583px;letter-spacing:0">00183</div>
<div class="t" style="left:121px;top:583px">Korsantin 100 1,25l</div>
<div class="n" style="left:381px;top:583px;width:100px;padding-right:1px">462,00</div>
<div class="n r" style="left:477px;top:583px;width:100px;padding-right:1px">-462,00</div>
<div class="n" style="left:535px;top:583px;width:100px;padding-right:1px">150,00</div>
<div class="n" style="left:717px;top:583px;width:100px;padding-right:1px">69.300,00</div>
<div class="n r" style="left:857px;top:583px;width:100px;padding-right:1px">-69.300,00</div>
<div class="hl" style="left:16px;top:600px;width:942px"></div>
<div class="ab" style="left:17px;top:601px;width:24px;height:1px;background:#fff"></div>
<div class="ab" style="left:17px;top:601px;width:1px;height:15px;background:#fff"></div>
<div class="ab" style="left:17px;top:616px;width:24px;height:1px;background:#a0a0a0"></div>
<div class="n" style="left:16px;top:601px;width:24px">32.</div>
<div class="t" style="left:43px;top:600px;letter-spacing:0">00184</div>
<div class="t" style="left:121px;top:600px">Korsantin 100 4l</div>
<div class="n" style="left:381px;top:600px;width:100px;padding-right:1px">462,00</div>
<div class="n r" style="left:477px;top:600px;width:100px;padding-right:1px">-462,00</div>
<div class="n" style="left:535px;top:600px;width:100px;padding-right:1px">480,00</div>
<div class="n" style="left:717px;top:600px;width:100px;padding-right:1px">221.760,00</div>
<div class="n r" style="left:857px;top:600px;width:100px;padding-right:1px">-221.760,00</div>
<div class="hl" style="left:16px;top:617px;width:942px"></div>
<div class="ab" style="left:16px;top:638px;width:943px;height:1px;background:#a0a0a0"></div>
<div class="vl" style="left:41px;top:617px;height:21px"></div>
<div class="vl" style="left:120px;top:617px;height:21px"></div>
<div class="vl" style="left:319px;top:617px;height:21px"></div>
<div class="vl" style="left:384px;top:617px;height:21px"></div>
<div class="vl" style="left:481px;top:617px;height:21px"></div>
<div class="vl" style="left:635px;top:617px;height:21px"></div>
<div class="vl" style="left:706px;top:617px;height:21px"></div>
<div class="vl" style="left:817px;top:617px;height:21px"></div>
<div class="ab" style="left:323px;top:636px;width:258px;height:3px;background:#a0a0a0"></div>
<div class="ab" style="left:320px;top:636px;width:3px;height:2px;background:#fff"></div>
<div class="ab" style="left:577px;top:622px;width:4px;height:17px;background:#a0a0a0"></div>
<div class="ab" style="left:320px;top:619px;width:64px;height:17px;border:1px solid #000;border-right:0;background:#fff"></div>
<div class="ab" style="left:385px;top:619px;width:96px;height:17px;border:1px solid #000;border-right:0;background:#fff"></div>
<div class="n" style="left:381px;top:618px;width:100px;line-height:17px;padding-right:1px">16.844,00</div>
<div class="ab" style="left:482px;top:619px;width:95px;height:17px;border:1px solid #000;border-right:0;background:#fff"></div>
<div class="n r" style="left:477px;top:618px;width:100px;line-height:17px;padding-right:1px">-16.844,00</div>
<div class="ab" style="left:639px;top:636px;width:322px;height:3px;background:#a0a0a0"></div>
<div class="ab" style="left:636px;top:636px;width:3px;height:2px;background:#fff"></div>
<div class="ab" style="left:957px;top:622px;width:4px;height:17px;background:#a0a0a0"></div>
<div class="ab" style="left:636px;top:619px;width:70px;height:17px;border:1px solid #000;border-right:0;background:#fff"></div>
<div class="ab" style="left:707px;top:619px;width:110px;height:17px;border:1px solid #000;border-right:0;background:#fff"></div>
<div class="n" style="left:717px;top:618px;width:100px;line-height:17px;padding-right:1px">2.999.780,00</div>
<div class="ab" style="left:818px;top:619px;width:139px;height:17px;border:1px solid #000;border-right:0;background:#fff"></div>
<div class="n r" style="left:857px;top:618px;width:100px;line-height:17px;padding-right:1px">-2.999.780,00</div>
<div class="ab" style="left:1302px;top:158px;width:1px;height:498px;background:#fff"></div>
<div class="ab" style="left:1303px;top:257px;width:15px;height:382px;background:#cdcdcd"></div>
<svg class="ab" style="left:1303px;top:158px" width="16" height="17"><polygon points="4,9.3 7.5,5.9 11,9.3 11,12 7.5,8.6 4,12" fill="#606060"/></svg>
<svg class="ab" style="left:1303px;top:640px" width="16" height="17"><polygon points="4,5 7.5,8.4 11,5 11,7.7 7.5,11.1 4,7.7" fill="#606060"/></svg>
</body></html>
